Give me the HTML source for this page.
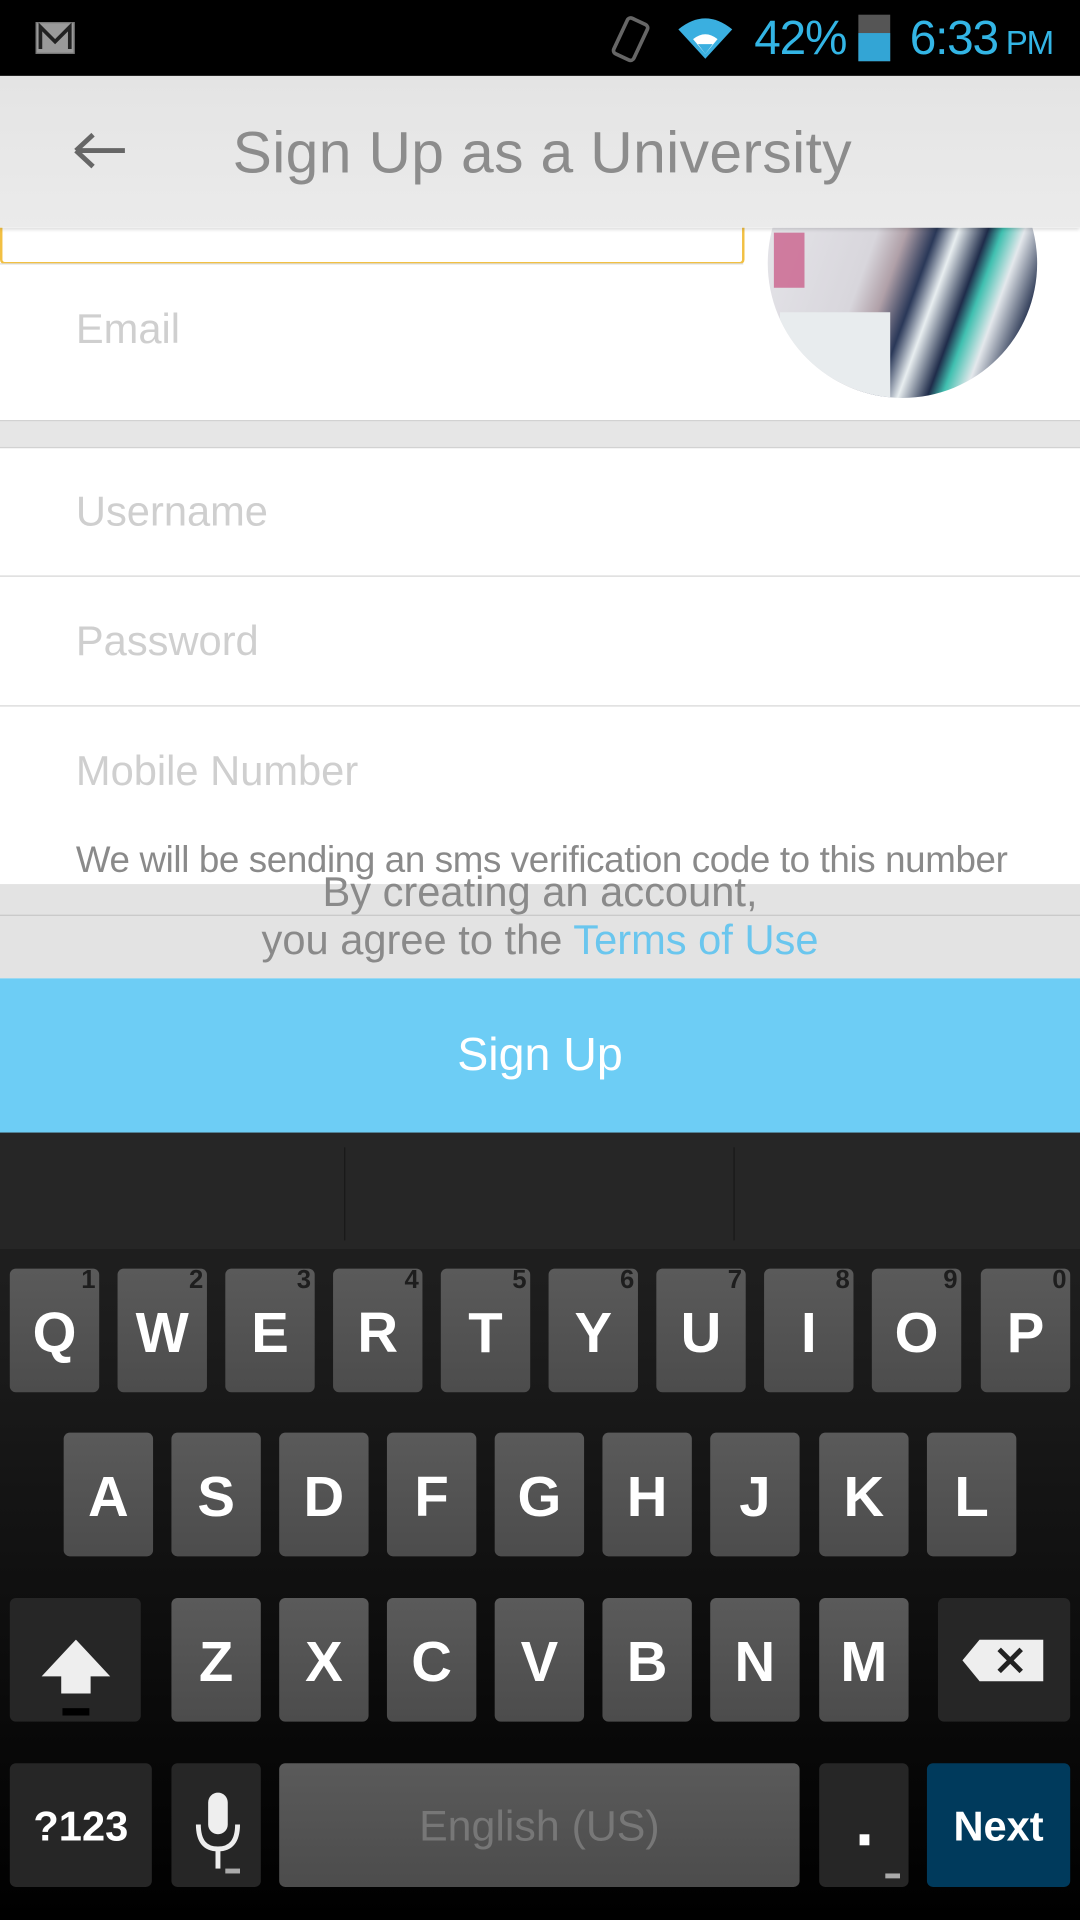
<!DOCTYPE html>
<html><head><meta charset="utf-8"><style>
html,body{margin:0;padding:0;width:1080px;height:1920px;overflow:hidden;background:#000}
#s{position:absolute;left:0;top:0;width:882px;height:1568px;transform:scale(1.22449);transform-origin:0 0;font-family:"Liberation Sans",sans-serif;overflow:hidden;background:#fff}
.a{position:absolute}
.t{position:absolute;white-space:nowrap}
.k{position:absolute;width:73px;height:101px;border-radius:5px;background:linear-gradient(#5a5a5a,#4c4c4c);color:#fff;font-weight:bold;font-size:46px;text-align:center;line-height:104px}
.k i{position:absolute;right:3px;top:-2px;font-style:normal;font-size:21px;line-height:24px;color:#1e1e1e;font-weight:bold}
.d{background:#262626}
</style></head><body><div id="s">
<div class="a" style="left:0;top:0;width:882px;height:62px;background:#000"></div>
<div class="a" style="left:29px;top:18px;width:30px;height:24px;background:#9a9a9a;border:1px solid #777"></div>
<svg class="a" style="left:29px;top:18px" width="32" height="26"><path d="M4 22V4l12 12L28 4v18" stroke="#222" stroke-width="3" fill="none"/></svg>
<svg class="a" style="left:496px;top:10px" width="40" height="44"><rect x="10" y="6" width="18" height="32" rx="3" transform="rotate(25 19 22)" stroke="#666" stroke-width="3" fill="none"/></svg>
<svg class="a" style="left:552px;top:12px" width="48" height="40"><path d="M2 12Q24-6 46 12L24 36Z" fill="#3aafe0"/><path d="M14 20Q24 12 34 20L24 32Z" fill="#fff"/><path d="M18 24L30 24 24 32Z" fill="#3aafe0"/></svg>
<div class="t" style="left:616px;top:10px;font-size:39px;color:#33b5e5;letter-spacing:-1px">42%</div>
<div class="a" style="left:701px;top:12px;width:26px;height:38px;background:#555"></div>
<div class="a" style="left:701px;top:27px;width:26px;height:23px;background:#33a5d5"></div>
<div class="t" style="left:743px;top:10px;font-size:39px;color:#33b5e5;letter-spacing:-1px">6:33<span style="font-size:27px"> PM</span></div>
<div class="a" style="left:0;top:62px;width:882px;height:124px;background:linear-gradient(#e4e4e4,#ebebeb);box-shadow:0 2px 3px rgba(0,0,0,.15);z-index:3"></div>
<svg class="a" style="left:58px;top:106px;z-index:4" width="48" height="34"><path d="M4 17H44M4 17L18 4M4 17L18 30" stroke="#666" stroke-width="4" fill="none"/></svg>
<div class="t" style="left:190px;top:98px;font-size:48px;color:#8c8c8c;z-index:4;letter-spacing:0.3px">Sign Up as a University</div>
<div class="a" style="left:0;top:170px;width:604px;height:42px;border:2px solid #f2c043;border-radius:4px;background:#fff"></div>
<div class="a" style="left:0;top:215px;width:607px;height:1px;background:#ddd"></div>
<div class="a" style="left:627px;top:105px;width:220px;height:220px;border-radius:50%;overflow:hidden;background:linear-gradient(110deg,#e8e8ec 0%,#d8d6dc 40%,#b0a0a8 48%,#2a3858 56%,#e8eef0 62%,#1f2c4a 70%,#40c0b0 74%,#e4e8ec 80%,#1f2c4a 90%)">
<div class="a" style="left:5px;top:85px;width:25px;height:45px;background:#c85080;opacity:.7"></div>
<div class="a" style="left:10px;top:150px;width:90px;height:70px;background:#e8ecee"></div>
</div>
<div class="t" style="left:62px;top:250px;font-size:34px;color:#cfcfcf">Email</div>
<div class="a" style="left:0;top:343px;width:882px;height:21px;background:#e6e6e6;border-top:1px solid #d2d2d2;border-bottom:1px solid #d2d2d2"></div>
<div class="t" style="left:62px;top:399px;font-size:34px;color:#cfcfcf">Username</div>
<div class="a" style="left:0;top:470px;width:882px;height:1px;background:#d6d6d6"></div>
<div class="t" style="left:62px;top:505px;font-size:34px;color:#cfcfcf">Password</div>
<div class="a" style="left:0;top:576px;width:882px;height:1px;background:#d6d6d6"></div>
<div class="t" style="left:62px;top:611px;font-size:34px;color:#cfcfcf">Mobile Number</div>
<div class="t" style="left:62px;top:686px;font-size:30px;color:#8a8a8a;letter-spacing:-0.3px">We will be sending an sms verification code to this number</div>
<div class="a" style="left:0;top:722px;width:882px;height:77px;background:rgba(218,218,218,.75)"></div>
<div class="a" style="left:0;top:747px;width:882px;height:1px;background:#c8c8c8"></div>
<div class="t" style="left:0;width:882px;text-align:center;top:710px;font-size:34px;color:#8a8a8a">By creating an account,</div>
<div class="t" style="left:0;width:882px;text-align:center;top:749px;font-size:34px;color:#8a8a8a">you agree to the <span style="color:#6ac6ee">Terms of Use</span></div>
<div class="a" style="left:0;top:799px;width:882px;height:126px;background:#6dcdf5"></div>
<div class="t" style="left:0;width:882px;text-align:center;top:841px;font-size:38px;color:#fff">Sign Up</div>
<div class="a" style="left:0;top:925px;width:882px;height:643px;background:linear-gradient(#222 0%,#1c1c1c 25%,#000 100%)"></div>
<div class="a" style="left:0;top:925px;width:882px;height:95px;background:#262626"></div>
<div class="a" style="left:281px;top:937px;width:1px;height:76px;background:#181818"></div>
<div class="a" style="left:599px;top:937px;width:1px;height:76px;background:#181818"></div>
<div class="k" style="left:8px;top:1036px">Q<i>1</i></div>
<div class="k" style="left:96px;top:1036px">W<i>2</i></div>
<div class="k" style="left:184px;top:1036px">E<i>3</i></div>
<div class="k" style="left:272px;top:1036px">R<i>4</i></div>
<div class="k" style="left:360px;top:1036px">T<i>5</i></div>
<div class="k" style="left:448px;top:1036px">Y<i>6</i></div>
<div class="k" style="left:536px;top:1036px">U<i>7</i></div>
<div class="k" style="left:624px;top:1036px">I<i>8</i></div>
<div class="k" style="left:712px;top:1036px">O<i>9</i></div>
<div class="k" style="left:801px;top:1036px">P<i>0</i></div>
<div class="k" style="left:52px;top:1170px">A</div>
<div class="k" style="left:140px;top:1170px">S</div>
<div class="k" style="left:228px;top:1170px">D</div>
<div class="k" style="left:316px;top:1170px">F</div>
<div class="k" style="left:404px;top:1170px">G</div>
<div class="k" style="left:492px;top:1170px">H</div>
<div class="k" style="left:580px;top:1170px">J</div>
<div class="k" style="left:669px;top:1170px">K</div>
<div class="k" style="left:757px;top:1170px">L</div>
<div class="k d" style="left:8px;top:1305px;width:107px"><svg class="a" style="left:24px;top:34px" width="60" height="64"><path d="M30 0L58 30H42V44H18V30H2Z" fill="#eee"/><rect x="19" y="56" width="22" height="6" fill="#000"/></svg></div>
<div class="k" style="left:140px;top:1305px">Z</div>
<div class="k" style="left:228px;top:1305px">X</div>
<div class="k" style="left:316px;top:1305px">C</div>
<div class="k" style="left:404px;top:1305px">V</div>
<div class="k" style="left:492px;top:1305px">B</div>
<div class="k" style="left:580px;top:1305px">N</div>
<div class="k" style="left:669px;top:1305px">M</div>
<div class="k d" style="left:766px;top:1305px;width:108px"><svg class="a" style="left:20px;top:34px" width="68" height="36"><path d="M14 0H66V34H14L0 17Z" fill="#eee"/><path d="M30 8L48 26M48 8L30 26" stroke="#222" stroke-width="4"/></svg></div>
<div class="k d" style="left:8px;top:1440px;width:116px;font-size:34px">?123</div>
<div class="k d" style="left:140px;top:1440px"><svg class="a" style="left:16px;top:22px" width="44" height="72"><rect x="14" y="2" width="16" height="34" rx="8" fill="#eee"/><path d="M6 28Q6 48 22 48Q38 48 38 28" stroke="#eee" stroke-width="4" fill="none"/><rect x="20" y="48" width="4" height="16" fill="#eee"/><rect x="28" y="64" width="12" height="4" fill="#aaa"/></svg></div>
<div class="k" style="left:228px;top:1440px;width:425px;font-weight:normal;font-size:35px;color:#777">English (US)</div>
<div class="k d" style="left:669px;top:1440px"><div class="a" style="left:33px;top:58px;width:8px;height:9px;background:#fff"></div><div class="a" style="left:54px;top:90px;width:12px;height:4px;background:#aaa"></div></div>
<div class="k" style="left:757px;top:1440px;width:117px;background:#003a5c;font-size:34px">Next</div>
</div></body></html>
